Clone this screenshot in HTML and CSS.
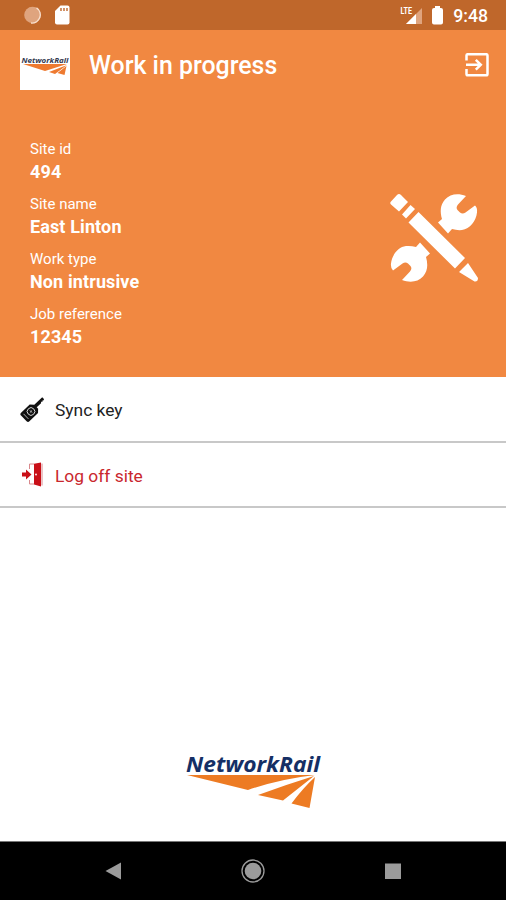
FILE: index.html
```html
<!DOCTYPE html>
<html lang="en">
<head>
<meta charset="utf-8">
<title>Work in progress</title>
<link rel="stylesheet" href="styles.css">
</head>
<body>
<div class="status">
  <svg class="status-left" viewBox="0 0 60 30"><circle cx="12.500" cy="15" r="8.300" fill="#dfa47e"/><path d="M16.500 7.800A8.300 8.300 0 0 1 11 23" fill="none" stroke="#f7dfcd" stroke-width="1.400"/><path d="M40.500 5.500h7q2 0 2 2v15q0 2-2 2H37q-2 0-2-2V11z" fill="#fff"/><path d="M41 8v3m3-3v3m3-3v3" stroke="#c0672b" stroke-width="1.400"/></svg>
  <svg class="status-right" viewBox="0 0 50 30"><path d="M23 8v16H7z" fill="#dfa47e"/><path d="M17 14v10H7z" fill="#fff"/><text x="1.500" y="14" font-size="9.500" font-weight="700" fill="#fff" textLength="11.500" lengthAdjust="spacingAndGlyphs">LTE</text><path d="M36 6h5v2h1q2 0 2 2v12.500q0 2-2 2h-7q-2 0-2-2V10q0-2 2-2h1z" fill="#fff"/></svg>
  <span class="time">9:48</span>
</div>
<main class="panel">
  <header class="header">
    <div class="brand"><svg viewBox="0 0 50 50"><text x="1.500" y="22.500" font-size="7.400" font-weight="700" font-style="italic" fill="#34394f" textLength="47" lengthAdjust="spacingAndGlyphs">NetworkRail</text><path d="M3 24h44L25 31zM47 25 35 34l-6-2zM46.500 26l-2 9-7-2z" fill="#ee7a30"/></svg></div>
    <h1>Work in progress</h1>
    <svg class="exit" viewBox="0 0 24 24"><path d="M1.500 7.500V2.500q0-1.300 1.300-1.300h18.400q1.300 0 1.300 1.300v18.500q0 1.300-1.300 1.300H2.800q-1.300 0-1.300-1.300v-5M1 11.700h14.500M10.800 6.800l5 4.900-5 4.900" fill="none" stroke="#fff" stroke-width="2.500"/></svg>
  </header>
  <section class="details">
    <dl>
      <dt>Site id</dt><dd>494</dd>
      <dt>Site name</dt><dd>East Linton</dd>
      <dt>Work type</dt><dd>Non intrusive</dd>
      <dt>Job reference</dt><dd>12345</dd>
    </dl>
    <svg class="tools" viewBox="0 0 110 110" fill="#fff">
      <defs><path id="wrench" d="M58 37.500 62 34C60 27 60 20 65 14.500 70 9 78 8 86 11l-8 8.500q-2.500 3-.5 5.500l2.500 2.500q2.500 2 5.500 0L95 20.500q2.500 2 2 7C96 36 90 44 82 45q-5 .500-10-1l-4 4.500z"/></defs>
      <path d="M11 16.500 17 10q2-2 4 0l7 7-9 9.500-8-7q-1.500-1.500 0-3zM30.500 20l4.500 4-9 9.500-4-4zM38.500 27 85 73 75 83.500 28.500 37.500zM88 78l10 15q0 4-3.500 3.500L79 87z"/>
      <use href="#wrench"/>
      <use href="#wrench" transform="rotate(180 54 53)"/>
    </svg>
  </section>
</main>
<nav class="menu">
  <div class="item">
    <svg viewBox="0 0 28 28"><g transform="translate(11 16.500) rotate(-44)"><path d="M-8-6H4l3 3.500h11v2.500l-1 .8-1-.8-1 1-1-1-1 1H7v2L4 6H-8q-2 0-2-2v-8q0-2 2-2z" fill="#111"/><circle r="3.800" fill="none" stroke="#ddd" stroke-width=".900"/><path d="M-1.500 0h3M0-1.500v3M-7-3.500v7" stroke="#ccc" stroke-width=".800"/></g></svg>
    <span>Sync key</span>
  </div>
  <div class="item danger">
    <svg viewBox="0 0 28 28"><path d="M14 2.800 21 1.500v24l-7-2z" fill="#c91018"/><path d="M14 3H9.500V8m0 11v4H14M22 2.500v22" fill="none" stroke="#d9888c" stroke-width="1"/><path d="M2 11.500h4V8.500l5.500 5L6 18.500v-3H2z" fill="#c91018"/><circle cx="16" cy="13.500" r=".900" fill="#fff"/></svg>
    <span>Log off site</span>
  </div>
</nav>
<footer class="footer">
  <svg viewBox="0 0 160 75"><text x="11" y="28" font-size="20.500" font-weight="700" font-style="italic" fill="#152f65" textLength="134" lengthAdjust="spacingAndGlyphs">NetworkRail</text><path d="M12 31h128Q105 35 73 46zM139 32 108 56.500 83 51Q110 41 139 32zM140 33 134.500 64 116.500 59.500Q128 44 140 33z" fill="#ed7b23"/></svg>
</footer>
<div class="navbar">
  <svg viewBox="0 0 24 24"><path d="M4.500 12 20 3.500v17z" fill="#9b9b9b"/></svg>
  <svg viewBox="0 0 24 24"><circle cx="12" cy="12" r="11" fill="none" stroke="#9b9b9b" stroke-width="1.300"/><circle cx="12" cy="12" r="8.300" fill="#9b9b9b"/></svg>
  <svg viewBox="0 0 24 24"><path d="M4 4.500h16v15.500H4z" fill="#9b9b9b"/></svg>
</div>
</body>
</html>
```
FILE: styles.css
```css
* { box-sizing: border-box; }
body {
  margin: 0;
  height: 900px;
  display: flex;
  flex-direction: column;
  background: #fff;
  font-family: Roboto, "Liberation Sans", sans-serif;
  overflow: hidden;
}
svg { display: block; flex: none; }
.status {
  height: 30px;
  display: flex;
  align-items: center;
  padding: 0 18px 0 20px;
  background: #bf672b;
  color: #fff;
}
.status-left { width: 60px; height: 30px; }
.status-right { width: 50px; height: 30px; margin-left: auto; }
.status-right text { font-family: Roboto, sans-serif; }
.time { width: 37px; margin-left: 2px; text-align: right; font-size: 17.7px; font-weight: 500; line-height: 30px; padding-top: 2px; white-space: nowrap; }
.panel { height: 347px; background: #f18841; color: #fff; }
.header { height: 70px; display: flex; align-items: center; padding: 0 17px 0 20px; }
.brand { width: 50px; height: 50px; background: #fff; }
.brand text { font-family: "Open Sans", sans-serif; }
.footer text { font-family: "Open Sans", sans-serif; }
.header h1 { margin: 2px 0 0 19px; font-size: 24.9px; font-weight: 500; line-height: 30px; }
.exit { width: 24px; height: 24px; margin-left: auto; margin-top: -1px; }
.details { display: flex; justify-content: space-between; padding: 38px 16px 0 30px; }
dl { margin: 0; }
dt { font-size: 15px; line-height: 22px; height: 22px; }
dd { margin: 0 0 10px; font-size: 18px; line-height: 23px; height: 23px; font-weight: 700; letter-spacing: 0.12px; }
.tools { width: 110px; height: 110px; margin-top: 47px; }
.item {
  height: 66px;
  display: flex;
  align-items: center;
  gap: 7px;
  padding-left: 20px;
  border-bottom: 2px solid #c8c8c8;
  color: #222;
  font-size: 17.4px;
}
.item + .item { height: 65px; }
.item svg { width: 28px; height: 28px; }
.item span { padding-top: 2px; }
.item.danger { color: #c9272d; }
.footer { margin-top: auto; height: 97px; display: flex; justify-content: center; }
.footer svg { width: 160px; height: 75px; margin-right: -4px; }
.navbar {
  height: 59px;
  display: flex;
  justify-content: center;
  gap: 116px;
  padding-top: 17px;
  background: #000;
  border-top: 1px solid #777;
}
.navbar svg { width: 24px; height: 24px; }
```
